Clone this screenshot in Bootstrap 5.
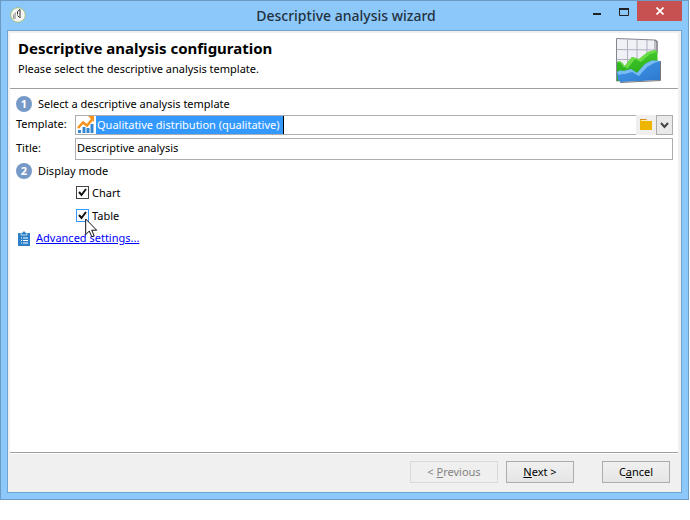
<!DOCTYPE html>
<html lang="en">
<head>
<meta charset="utf-8">
<meta name="viewport" content="width=device-width, initial-scale=1">
<title>Descriptive analysis wizard</title>
<link href="https://cdn.jsdelivr.net/npm/bootstrap@5.3.0/dist/css/bootstrap.min.css" rel="stylesheet">
<style>
body{font-family:"Noto Sans","Open Sans",sans-serif;font-size:11px;line-height:16px;color:#000;background:#fff}
.wizard{min-height:calc(100vh - 20px);margin-right:1px;background:#8dc8fa;border:1px solid #6b9ac4;padding:0 6px 6px}
.titlebar{height:29px;padding-left:3px}
.titlebar h1{font-size:14px;line-height:20px;color:#23323f;margin:0}
.side{width:120px}
.winbtn{border:0;padding:0;background:none;height:20px;width:27px;display:flex;align-items:center;justify-content:center}
.winclose{background:#c75050;width:45px}
.client{border:1px solid #6ea3d3;background:#f0f0f0;padding:2px 3px 0 2px}
.page-part{background:#fff}
.head{height:56px;border-bottom:1px solid #a0a0a0;padding:4px 14px 0 8px}
.head h2{font-size:15px;line-height:22px;font-weight:700;margin:0}
.head p{line-height:20px;margin:0}
.main-part{padding:5px 5px 0 6px;border-bottom:1px solid #a0a0a0}
.step{height:20px;gap:6px}
.num{width:16px;height:16px;border-radius:50%;background:#7799c8;color:#fff;font-weight:700;line-height:16px;text-align:center}
.fieldname{width:59px;line-height:18px}
.template-row{height:20px;margin-top:1px}
.title-row{height:22px;margin:3px 0 1px}
.title-row .fieldname{line-height:20px}
.box{border:1px solid #abadb3;border-right:0;background:#fff;height:20px;padding-left:1px}
.picked{background:#3399ff;color:#fff;width:188px;border:0;border-right:1px solid #000;border-radius:0;height:18px;line-height:16px;outline:0;padding:0 0 2px 1px}
.titlefield{height:22px;line-height:16px;border:1px solid #abadb3;border-radius:0;padding:0 1px 3px;color:#000;outline:0}
.sq{border:0;padding:0;width:20px;height:20px;background:#efefef;display:flex;align-items:center;justify-content:center}
.drop{border:1px solid #acacac;width:17px;background:#e9e9e9}
.option{height:23px;gap:3px;padding-left:60px}
.option input{appearance:none;width:13px;height:13px;margin:0;border:1px solid #444;background:#fff url("data:image/svg+xml,%3Csvg xmlns='http://www.w3.org/2000/svg' viewBox='0 0 11 11'%3E%3Cpath d='M2 5l2.500 3L9 2' fill='none' stroke='%23111' stroke-width='2'/%3E%3C/svg%3E")}
.option input.hot{border-color:#3399ff}
.pointer{position:absolute;left:69px;top:14px;z-index:2}
.adv{height:22px;gap:5px;padding-left:2px}
.adv a{color:#00f}
.foot{border-top:1px solid #fff;height:39px;padding:7px 8px 0}
.foot .btn{font-size:11px;line-height:16px;height:22px;width:68px;padding:0 0 1px;border:1px solid #acacac;border-radius:0;background:linear-gradient(#f0f0f0,#e5e5e5);color:#000}
.foot .prev{width:88px;border-color:#d9d9d9;background:#efefef;color:#838383;opacity:1}
.foot .next{margin:0 28px 0 8px}
</style>
</head>
<body>
<div class="wizard d-flex flex-column">
<header class="titlebar d-flex">
<div class="side pt-1">
<svg class="d-block" width="16" height="18" viewBox="0 0 16 18"><circle cx="8" cy="10" r="7.300" fill="#f6f7f3" stroke="#a2c27c"/><path d="M3 14v-4l3-3v7z" fill="#999"/><path d="M5 9v5" stroke="#ddd"/><path d="M7.500 9.500V6.500L10 4.500v8.500M7.500 10.500l2 2" fill="none" stroke="#333"/></svg>
</div>
<h1 class="flex-fill text-center align-self-center">Descriptive analysis wizard</h1>
<div class="side d-flex justify-content-end">
<button type="button" class="winbtn" aria-label="Minimize"><svg width="8" height="12"><path d="M0 8h8v2H0z" fill="#222"/></svg></button>
<button type="button" class="winbtn" aria-label="Maximize"><svg width="10" height="9"><path d="M.5 1v7.500h9V1" fill="none" stroke="#222"/><path d="M0 1h10v2H0z" fill="#222"/></svg></button>
<button type="button" class="winbtn winclose" aria-label="Close"><svg width="8" height="8"><path d="M.5.500l7 7M7.500.500l-7 7" stroke="#fff" stroke-width="1.700"/></svg></button>
</div>
</header>
<div class="client flex-fill d-flex flex-column">
<section class="page-part head d-flex justify-content-between">
<div><h2>Descriptive analysis configuration</h2><p>Please select the descriptive analysis template.</p></div>
<svg width="50" height="48" viewBox="0 0 50 48">
<defs>
<linearGradient id="gGreen" x2="0" y2="1"><stop stop-color="#43c92c"/><stop offset="1" stop-color="#25aa18"/></linearGradient>
<linearGradient id="gBlue" x2="1" y2="1"><stop stop-color="#459ceb"/><stop offset="1" stop-color="#2b78cf"/></linearGradient>
</defs>
<path d="M2.500 1.500L41 3v39l-38.500 2z" fill="#f0f0f7" stroke="#85858f"/>
<path d="M13.500 2v30M23 2.500v22M33 3v17M3 12.500l38 .5M3 22.500h25" stroke="#b0b0bf" fill="none"/>
<path d="M41 3l2 1.500V16" stroke="#74747e" fill="none" stroke-width="1.500"/>
<path d="M3 25l3-1 4 6 8-10 7 2 9-7 7-2 2.500 2v16L25 42 3 44z" fill="url(#gGreen)"/>
<path d="M3 25l3-1 4 6 8-10 7 2 9-7 7-2 2.500 2-7.500 2-9 8-6-3-8 10-5-7-2 1z" fill="#6bdc47"/>
<path d="M3 35l3-1.500 4 .5 7-2 6 4 8-9 7-3.500 8 .5v19l-39 2-3-2z" fill="url(#gBlue)"/>
<path d="M3 35l3-1.500 4 .5 7-2 6 4 8-9 7-3.500 8 .5-6 2-7 4-8 9-7-4-7 2-3 0-3 1z" fill="#78bcf5"/>
<path d="M6 45.500l40.500-2V24" stroke="#77777d" fill="none"/>
</svg>
</section>
<main class="page-part main-part flex-fill">
<div class="step d-flex align-items-center"><span class="num">1</span><span>Select a descriptive analysis template</span></div>
<div class="template-row d-flex">
<label class="fieldname" for="template">Template:</label>
<div class="box flex-fill d-flex">
<svg class="flex-shrink-0" width="19" height="18" viewBox="0 0 19 18"><path d="M1 14h3v3H1zM5.500 11h3v6h-3zM9.500 12h3v5h-3zM13.500 8h3v9h-3z" fill="#3588cf"/><path d="M1 12l5-5.500 4 3L15.500 3" fill="none" stroke="#f7941d" stroke-width="2.500"/><path d="M11 0h6v6z" fill="#f7941d"/></svg>
<input class="picked" id="template" type="text" value="Qualitative distribution (qualitative)">
</div>
<button type="button" class="sq" aria-label="Choose folder"><svg width="13" height="12"><path d="M0 0h6l1 2h5v9H0z" fill="#eeb500"/><path d="M0 0h6l1 1H0z" fill="#dc8c18"/><path d="M1 1.500h6" stroke="#fff0b0"/></svg></button>
<button type="button" class="sq drop" aria-label="Show templates"><svg width="9" height="7"><path d="M1 1l3.500 4L8 1" fill="none" stroke="#444" stroke-width="2"/></svg></button>
</div>
<div class="title-row d-flex">
<label class="fieldname" for="title">Title:</label>
<input class="titlefield flex-fill" id="title" type="text" value="Descriptive analysis">
</div>
<div class="step d-flex align-items-center"><span class="num">2</span><span>Display mode</span></div>
<div class="option d-flex align-items-center"><input type="checkbox" id="chart" checked><label for="chart">Chart</label></div>
<div class="option d-flex align-items-center position-relative"><input class="hot" type="checkbox" id="table" checked><label for="table">Table</label>
<svg class="pointer" width="13" height="20" viewBox="0 0 13 20"><path d="M.700 1v15.500l3.600-3.400 2.500 5.700 2.400-1-2.500-5.600h5z" fill="#fff" stroke="#111"/></svg>
</div>
<div class="adv d-flex align-items-center"><svg width="13" height="16" viewBox="0 0 13 16"><path d="M0 3h12v13H0z" fill="#2d7fc8"/><path d="M3 5V2.500h1.500a1.500 1.500 0 0 1 3 0H9V5z" fill="#2d7fc8" stroke="#fff" stroke-width=".7"/><path d="M3 8h1m1 0h5M3 10.500h1m1 0h5M3 13h1m1 0h5" stroke="#fff"/></svg><a href="#">Advanced settings...</a></div>
</main>
<footer class="foot d-flex justify-content-end"><button type="button" class="btn prev" disabled>&lt; <u>P</u>revious</button><button type="button" class="btn next"><u>N</u>ext &gt;</button><button type="button" class="btn">C<u>a</u>ncel</button></footer>
</div>
</div>
<script src="https://cdn.jsdelivr.net/npm/bootstrap@5.3.0/dist/js/bootstrap.bundle.min.js"></script>
</body>
</html>
